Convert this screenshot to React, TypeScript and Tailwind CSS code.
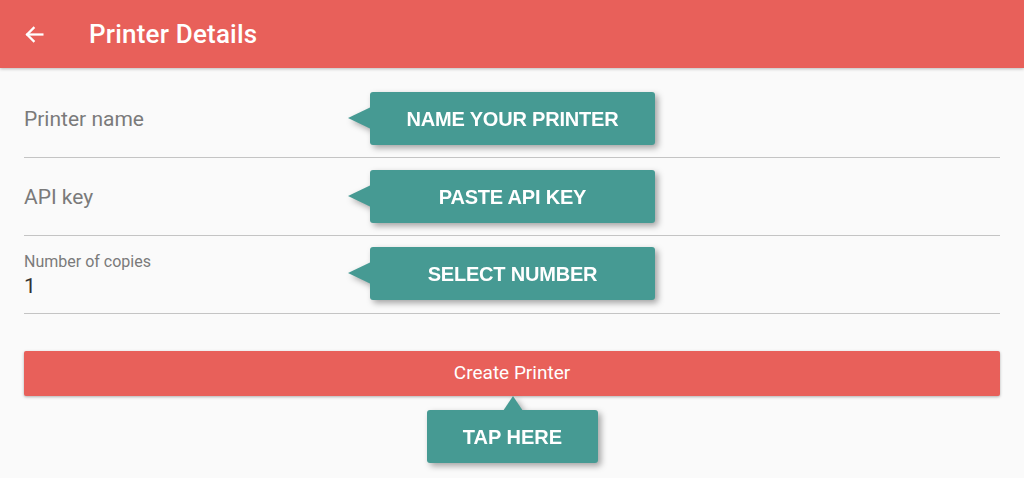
import React from "react";

function Tip({ children, className }: { children: React.ReactNode; className?: string }) {
  return (
    <div className={"absolute drop-shadow-[3px_3px_3px_rgba(0,0,0,0.35)] " + (className ?? "")}>
      <div className="absolute left-[-22px] top-[15px] w-0 h-0 border-y-[11px] border-y-transparent border-r-[23px] border-r-[#469a93]" />
      <div className="w-[285px] h-[53px] rounded-[3px] bg-[#469a93] flex items-center justify-center text-white font-bold text-[20px] tracking-[-0.2px] [font-family:'Liberation_Sans',Arial,sans-serif]">
        {children}
      </div>
    </div>
  );
}

export default function App() {
  return (
    <div className="w-[1024px] h-[478px] bg-[#fafafa] overflow-hidden [font-family:Roboto,'Noto_Sans',sans-serif]">
      <header className="h-[68px] bg-[#e8605a] flex items-center shadow-[0_1px_3px_rgba(0,0,0,0.25)] relative z-10">
        <svg className="ml-[24px] w-[21px] h-[21px]" viewBox="0 0 24 24" fill="none" stroke="white" strokeWidth="2.6" strokeLinecap="square">
          <path d="M21 12H4" />
          <path d="M11 4.5 3.5 12 11 19.5" />
        </svg>
        <h1 className="ml-[44px] text-white text-[26px] font-medium tracking-[0.2px]">Printer Details</h1>
      </header>
      <main className="px-[24px] pt-[12px]">
        <div className="relative h-[78px] border-b border-[#c4c4c4] flex items-center pt-[2px]">
          <span className="text-[21px] text-[#7a7a7a]">Printer name</span>
          <Tip className="left-[346px] top-[12px]">NAME YOUR PRINTER</Tip>
        </div>
        <div className="relative h-[78px] border-b border-[#c4c4c4] flex items-center pt-[2px]">
          <span className="text-[21px] text-[#7a7a7a]">API key</span>
          <Tip className="left-[346px] top-[12px]">PASTE API KEY</Tip>
        </div>
        <div className="relative h-[78px] border-b border-[#c4c4c4] flex flex-col justify-center pt-[2px]">
          <span className="text-[16px] leading-[20px] text-[#7a7a7a]">Number of copies</span>
          <span className="text-[21px] leading-[28px] text-[#333]">1</span>
          <Tip className="left-[346px] top-[11px]">SELECT NUMBER</Tip>
        </div>
        <div className="relative mt-[37px]">
          <button className="w-full h-[45px] rounded-[2px] bg-[#e8605a] text-white text-[19px] shadow-[0_1px_3px_rgba(0,0,0,0.3)]">
            Create Printer
          </button>
          <div className="absolute left-[403px] top-[59px] drop-shadow-[3px_3px_3px_rgba(0,0,0,0.35)]">
            <div className="absolute left-[76px] top-[-14px] w-0 h-0 border-x-[10px] border-x-transparent border-b-[15px] border-b-[#469a93]" />
            <div className="w-[171px] h-[53px] rounded-[3px] bg-[#469a93] flex items-center justify-center text-white font-bold text-[20px] [font-family:'Liberation_Sans',Arial,sans-serif]">
              TAP HERE
            </div>
          </div>
        </div>
      </main>
    </div>
  );
}
